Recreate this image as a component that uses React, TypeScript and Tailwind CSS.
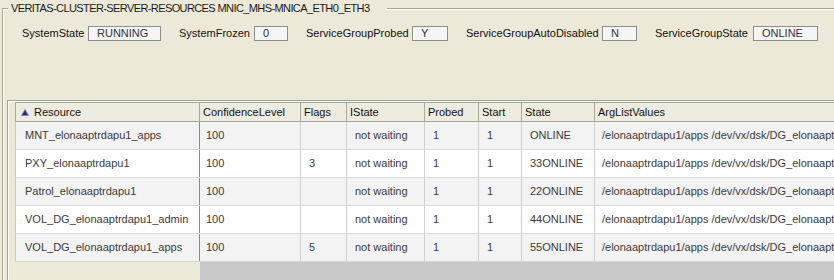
const fields = [
  { label: "SystemState", labelW: "w-[66px]", value: "RUNNING", boxW: "w-[73px]" },
  { label: "SystemFrozen", labelW: "w-[75px]", value: "0", boxW: "w-[34px]" },
  { label: "ServiceGroupProbed", labelW: "w-[106px]", value: "Y", boxW: "w-[36px]" },
  { label: "ServiceGroupAutoDisabled", labelW: "w-[136px]", value: "N", boxW: "w-[35px]" },
  { label: "ServiceGroupState", labelW: "w-[98px]", value: "ONLINE", boxW: "w-[65px]" },
];

const columns = [
  { key: "resource", title: "Resource", w: "w-[185px] border-l", pad: "pl-[9px]" },
  { key: "confidence", title: "ConfidenceLevel", w: "w-[101px]", pad: "pl-[6px]" },
  { key: "flags", title: "Flags", w: "w-[46px]", pad: "pl-[8px]" },
  { key: "istate", title: "IState", w: "w-[78px]", pad: "pl-[8px]" },
  { key: "probed", title: "Probed", w: "w-[54px]", pad: "pl-[8px]" },
  { key: "start", title: "Start", w: "w-[43px]", pad: "pl-[8px]" },
  { key: "state", title: "State", w: "w-[73px]", pad: "pl-[8px]" },
  { key: "args", title: "ArgListValues", w: "w-[420px]", pad: "pl-[7px]" },
];

const args = "/elonaaptrdapu1/apps /dev/vx/dsk/DG_elonaaptrdapu1/vol_apps";

const rows = [
  ["MNT_elonaaptrdapu1_apps", "100", "", "not waiting", "1", "1", "ONLINE", args],
  ["PXY_elonaaptrdapu1", "100", "3", "not waiting", "1", "1", "33ONLINE", args],
  ["Patrol_elonaaptrdapu1", "100", "", "not waiting", "1", "1", "22ONLINE", args],
  ["VOL_DG_elonaaptrdapu1_admin", "100", "", "not waiting", "1", "1", "44ONLINE", args],
  ["VOL_DG_elonaaptrdapu1_apps", "100", "5", "not waiting", "1", "1", "55ONLINE", args],
];

function SortIcon() {
  return (
    <svg width="8" height="7" viewBox="0 0 8 7" className="shrink-0">
      <polygon points="4,0.5 7.5,6.5 0.5,6.5" fill="#1f2f86" stroke="#6f7fc4" strokeWidth="0.8" />
    </svg>
  );
}

export default function App() {
  return (
    <div className="w-[834px] h-[280px] overflow-hidden bg-[#ece9d8] font-['Liberation_Sans',Arial,sans-serif] text-[11px] text-[#111]">
      <div className="relative ml-[2px] mt-[8px] border-l border-t border-[#a3a295] shadow-[inset_1px_1px_0_#ffffff]">
        <span className="absolute left-[5px] top-[-7px] bg-[#ece9d8] pl-[3px] pr-[18px] leading-[13px] tracking-[-0.6px] whitespace-nowrap text-[#1a1a1a]">
          VERITAS-CLUSTER-SERVER-RESOURCES MNIC_MHS-MNICA_ETH0_ETH3
        </span>

        <div className="flex items-center gap-[18px] pl-[19px] pt-[17px] h-[32px]">
          {fields.map((f) => (
            <div key={f.label} className="flex items-center shrink-0">
              <span className={`${f.labelW} whitespace-nowrap leading-[15px]`}>{f.label}</span>
              <div className={`${f.boxW} h-[15px] border border-[#8d8d8d] bg-[#f5f5f5] pl-[8px] leading-[13px] text-[#333]`}>
                {f.value}
              </div>
            </div>
          ))}
        </div>

        <div className="ml-[4px] mt-[59px] border-l border-t border-[#a3a295] shadow-[inset_1px_1px_0_#ffffff] pl-[7px] pt-[1px]">
          <div className="flex h-[20px] border-t border-b border-[#a5a49a] bg-[#eeecdf] text-[#111]">
            {columns.map((c, i) => (
              <div
                key={c.key}
                className={`${c.w} shrink-0 flex items-center gap-[5px] border-r border-[#aaa99f] ${i === 0 ? "pl-[5px]" : "pl-[3px]"} whitespace-nowrap overflow-hidden leading-[18px]`}
              >
                {i === 0 && <SortIcon />}
                {c.title}
              </div>
            ))}
          </div>

          {rows.map((r, ri) => (
            <div
              key={r[0]}
              className={`flex h-[28px] border-b border-[#d6d6d6] ${ri % 2 === 0 ? "bg-[#f3f3f3]" : "bg-white"} text-[#3a3a3a]`}
            >
              {columns.map((c, ci) => (
                <div
                  key={c.key}
                  className={`${c.w} ${c.pad} shrink-0 flex items-center whitespace-nowrap overflow-hidden border-r ${ci === 0 ? "border-l-[#c9c9c9] border-r-[#8a8a8a]" : "border-[#cfcfcf]"}`}
                >
                  {r[ci]}
                </div>
              ))}
            </div>
          ))}

          <div className="flex h-[40px]">
            <div className="w-[185px] shrink-0" />
            <div className="flex-1 bg-[#c9c9c9]" />
          </div>
        </div>
      </div>
    </div>
  );
}
